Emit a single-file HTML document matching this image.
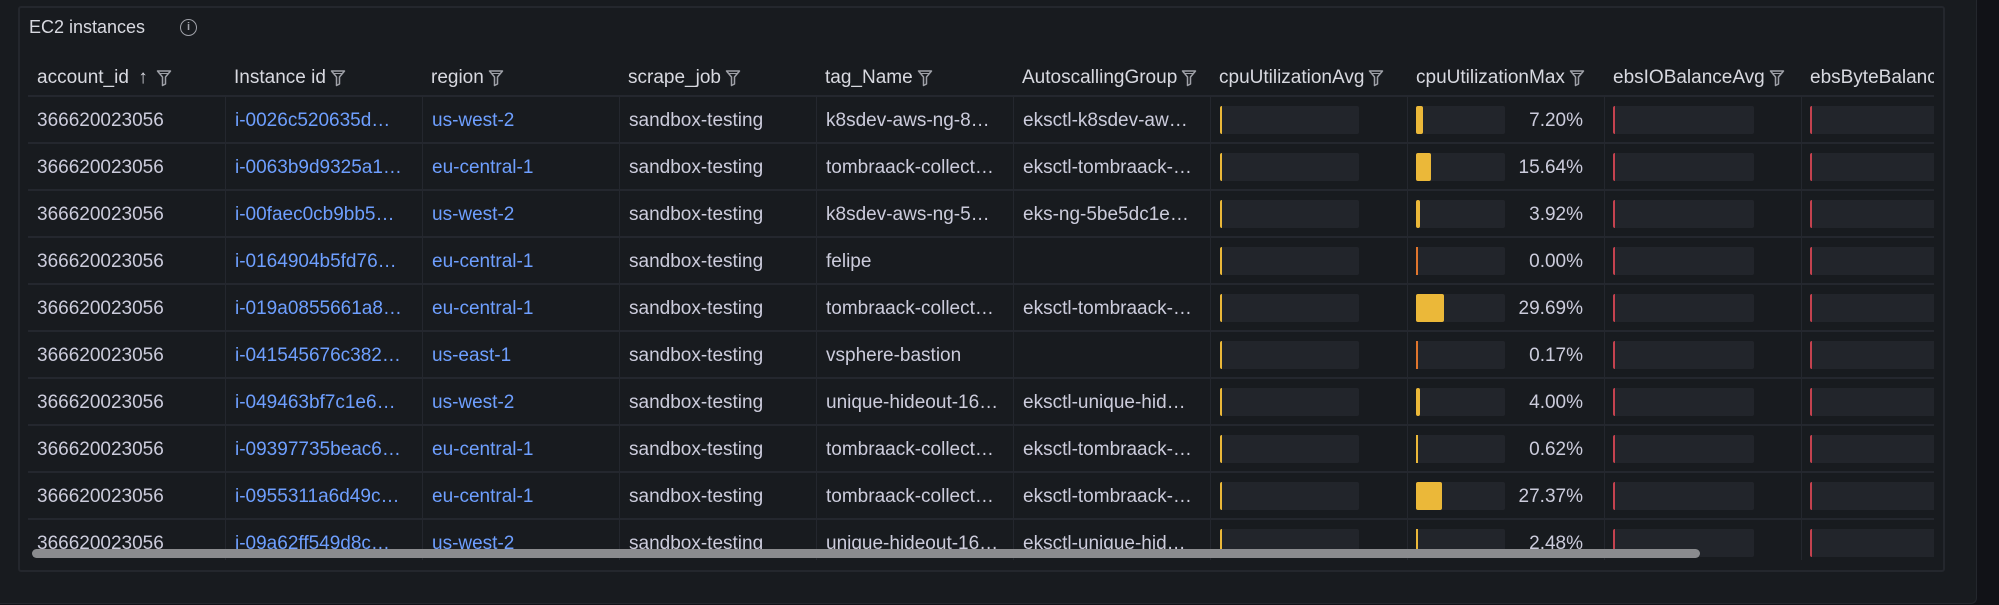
<!DOCTYPE html>
<html><head><style>
*{box-sizing:border-box;margin:0;padding:0}
body{width:1999px;height:605px;background:#111217;overflow:hidden;font-family:"Liberation Sans",sans-serif;color:#ccccdc;position:relative}
.outer{position:absolute;left:0;top:0;width:1977px;height:604px;background:#181b1f;border-right:1px solid #24272d;border-bottom:1px solid #24272d;border-bottom-right-radius:6px}
.panel{position:absolute;left:18px;top:6px;width:1927px;height:566px;border:2px solid #24272d;border-radius:3px;background:#181b1f}
.title{position:absolute;left:29px;top:17px;font-size:18px;color:#d8d9e0}
.info{position:absolute;left:180px;top:19px;width:17px;height:17px;border:1.5px solid #9fa1a8;border-radius:50%;font-size:11px;color:#9fa1a8;text-align:center;line-height:14px;font-weight:bold}
.tbl{position:absolute;left:28px;top:50px;width:1906px;height:510px;overflow:hidden}
.row{position:absolute;left:0;height:47px;width:1906px;border-bottom:2px solid #24272e}
.cell{position:absolute;top:0;height:45px;width:197px;padding:0 9px;line-height:47px;font-size:19px;white-space:nowrap;overflow:hidden;text-overflow:ellipsis}
.row.d .cell{border-left:1px solid #24272e}
.row.d .cell:first-child{border-left:none}
.hd .cell{text-overflow:clip;padding-right:4px;line-height:56px;color:#d8d9e0}
.lnk{color:#6e9fff}
.fil{display:inline-block;vertical-align:middle;margin-left:4px}
.bb{position:absolute;top:9px;height:28px;background:#22252b;border-radius:2px}
.bf{position:absolute;left:0;top:0;height:28px;background:#ebb839;border-radius:2px}
.val{position:absolute;right:21px;top:0;line-height:47px;font-size:19px}
.sb{position:absolute;left:32px;top:549px;width:1668px;height:9px;background:#8a8b8e;border-radius:5px}
</style></head><body>
<div class="outer"></div>
<div class="panel"></div>
<div class="title">EC2 instances</div>
<div class="info">i</div>
<div class="tbl" id="t"></div>
<div class="sb"></div>
<script>
(function(){
var F='<svg class="fil" width="16" height="18" viewBox="0 0 16 18"><path d="M1.5 2h13l-5 6v7l-3 1.5V8z" fill="none" stroke="#9fa1a8" stroke-width="1.5" stroke-linejoin="round"/><path d="M3 4.5h10" stroke="#9fa1a8" stroke-width="1"/></svg>';
var H=['account_id <span style="font-size:19px;font-weight:bold;margin:0 4px">&#8593;</span>','Instance id','region','scrape_job','tag_Name','AutoscallingGroup','cpuUtilizationAvg','cpuUtilizationMax','ebsIOBalanceAvg','ebsByteBalance'];
var D=[["i-0026c520635d…","us-west-2","k8sdev-aws-ng-8…","eksctl-k8sdev-aw…",7.20],
["i-0063b9d9325a1…","eu-central-1","tombraack-collect…","eksctl-tombraack-…",15.64],
["i-00faec0cb9bb5…","us-west-2","k8sdev-aws-ng-5…","eks-ng-5be5dc1e…",3.92],
["i-0164904b5fd76…","eu-central-1","felipe","",0.00],
["i-019a0855661a8…","eu-central-1","tombraack-collect…","eksctl-tombraack-…",29.69],
["i-041545676c382…","us-east-1","vsphere-bastion","",0.17],
["i-049463bf7c1e6…","us-west-2","unique-hideout-16…","eksctl-unique-hid…",4.00],
["i-09397735beac6…","eu-central-1","tombraack-collect…","eksctl-tombraack-…",0.62],
["i-0955311a6d49c…","eu-central-1","tombraack-collect…","eksctl-tombraack-…",27.37],
["i-09a62ff549d8c…","us-west-2","unique-hideout-16…","eksctl-unique-hid…",2.48]];
var h='<div class="row hd" style="top:0">';
for(var i=0;i<10;i++){h+='<div class="cell" style="left:'+(197*i)+'px"><span style="display:inline-block;max-width:'+(i>=5?156:170)+'px;overflow:hidden;vertical-align:middle;line-height:24px">'+H[i]+'</span>'+(i<9?F:'')+'</div>';}
h+='</div>';
for(var r=0;r<10;r++){var d=D[r];var yy=47+47*r;
h+='<div class="row d" style="top:'+yy+'px">';
h+='<div class="cell" style="left:0">366620023056</div>';
h+='<div class="cell lnk" style="left:197px">'+d[0]+'</div>';
h+='<div class="cell lnk" style="left:394px">'+d[1]+'</div>';
h+='<div class="cell" style="left:591px">sandbox-testing</div>';
h+='<div class="cell" style="left:788px">'+d[2]+'</div>';
h+='<div class="cell" style="left:985px">'+d[3]+'</div>';
h+='<div class="cell" style="left:1182px"><div class="bb" style="left:9px;width:139px;border-left:2px solid #ebb839"></div></div>';
var fw=d[4]*0.95;var st=fw<3?'width:2px;border-radius:0;background:'+(d[4]<0.5?'#e0752d':'#ebb839'):'width:'+fw+'px';
h+='<div class="cell" style="left:1379px"><div class="bb" style="left:8px;width:89px"><div class="bf" style="'+st+'"></div></div><div class="val">'+d[4].toFixed(2)+'%</div></div>';
h+='<div class="cell" style="left:1576px"><div class="bb" style="left:8px;width:141px;border-left:2px solid #c4424f"></div></div>';
h+='<div class="cell" style="left:1773px"><div class="bb" style="left:8px;width:141px;border-left:2px solid #c4424f"></div></div>';
h+='</div>';}
document.getElementById('t').innerHTML=h;
})();
</script>
</body></html>
